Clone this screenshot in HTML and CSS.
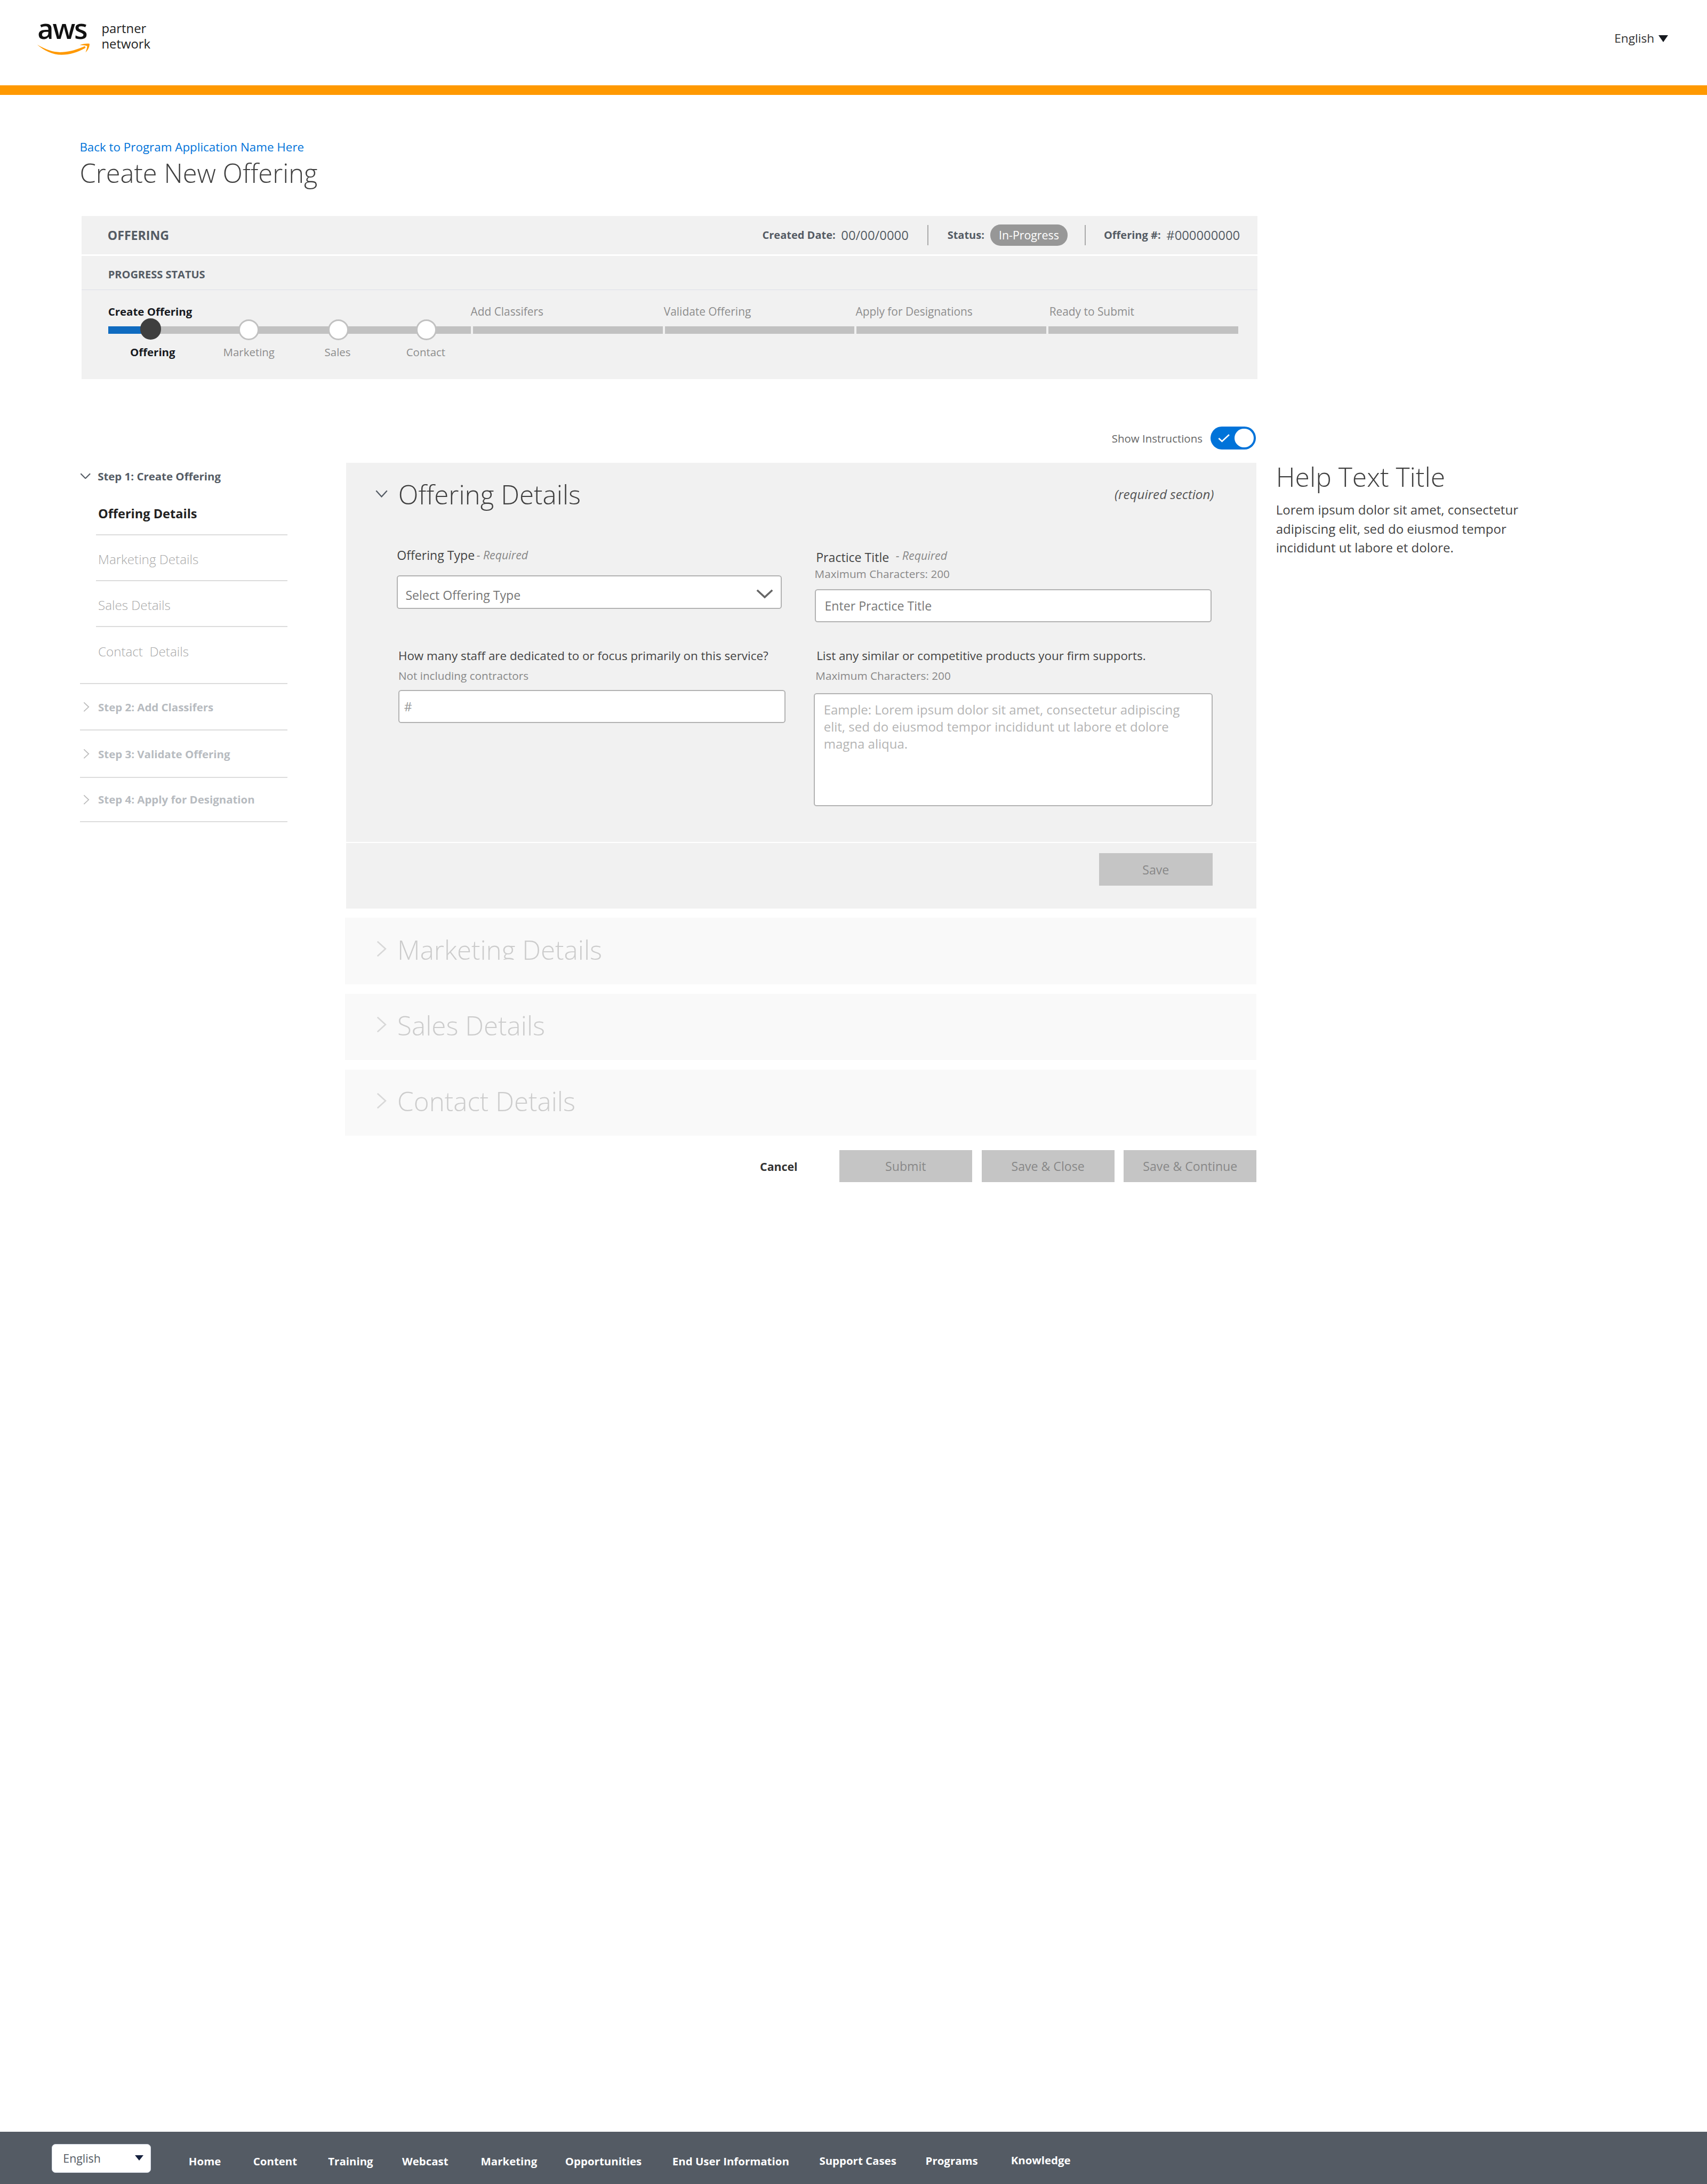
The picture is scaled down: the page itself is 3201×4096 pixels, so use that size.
FILE: index.html
```html
<!DOCTYPE html>
<html lang="en">
<head>
<meta charset="utf-8">
<title>Create New Offering</title>
<link rel="stylesheet" href="styles.css">
</head>
<body>
<div class="page">
  <header class="site-header">
    <div class="logo">
      <div class="logo-mark">
        <span class="logo-aws">aws</span>
        <svg class="logo-smile" viewBox="80 210 340 80"><path d="M85 222C145 258 195 273 245 270C295 268 340 252 388 232L392 243C340 272 290 287 240 287C185 287 130 262 85 222Z"/><path d="M355 225C375 218 400 214 417 217C418 235 408 258 392 272C398 255 403 240 402 231C392 227 375 226 355 225Z"/></svg>
      </div>
      <div class="logo-text">partner<br>network</div>
    </div>
    <div class="lang">English<span class="caret"></span></div>
  </header>
  <div class="accent"></div>

  <main class="content">
    <a class="back" href="#">Back to Program Application Name Here</a>
    <h1 class="title">Create New Offering</h1>

    <div class="summary">
      <section class="bar">
        <div class="bar-name">OFFERING</div>
        <div class="meta">
          <div class="meta-item"><b>Created Date:</b><span class="meta-date">00/00/0000</span></div>
          <i class="meta-sep"></i>
          <div class="meta-item meta-status"><b>Status:</b><span class="pill">In-Progress</span></div>
          <i class="meta-sep"></i>
          <div class="meta-item meta-number"><b>Offering #:</b><span class="meta-date">#000000000</span></div>
        </div>
      </section>
      <section class="progress">
        <div class="progress-head">PROGRESS STATUS</div>
        <div class="phases">
          <div class="phase phase-first">
            <div class="phase-label current">Create Offering</div>
            <div class="track">
              <div class="track-fill"></div>
              <div class="stop stop-1"><i class="dot dot-on"></i><span class="stop-label on">Offering</span></div>
              <div class="stop stop-2"><i class="dot"></i><span class="stop-label">Marketing</span></div>
              <div class="stop stop-3"><i class="dot"></i><span class="stop-label">Sales</span></div>
              <div class="stop stop-4"><i class="dot"></i><span class="stop-label">Contact</span></div>
            </div>
          </div>
          <div class="phase"><div class="phase-label shift-a">Add Classifers</div><div class="track"></div></div>
          <div class="phase"><div class="phase-label shift-b">Validate Offering</div><div class="track"></div></div>
          <div class="phase"><div class="phase-label shift-b">Apply for Designations</div><div class="track"></div></div>
          <div class="phase"><div class="phase-label shift-c">Ready to Submit</div><div class="track"></div></div>
        </div>
      </section>
      <div class="instructions">
        <span>Show Instructions</span>
        <div class="toggle">
          <svg class="toggle-check" viewBox="0 0 25 17"><path d="M1.5 9L8.5 15.5L23.5 1.5"/></svg>
          <i class="toggle-knob"></i>
        </div>
      </div>
    </div>

    <div class="workspace">
      <nav class="side">
        <div class="side-group">
          <div class="side-step side-step-open">
            <svg class="side-chev" viewBox="0 0 23 13"><path d="M1.5 1.5L11.5 11.5L21.5 1.5"/></svg>
            <span>Step 1: Create Offering</span>
          </div>
          <div class="side-item active">Offering Details</div>
          <div class="side-item">Marketing Details</div>
          <div class="side-item">Sales Details</div>
          <div class="side-item side-item-last">Contact&nbsp; Details</div>
        </div>
        <div class="side-step side-step-a"><svg class="side-arrow" viewBox="0 0 13 22"><path d="M1.5 1.5L11.5 11L1.5 20.5"/></svg><span>Step 2: Add Classifers</span></div>
        <div class="side-step side-step-b"><svg class="side-arrow" viewBox="0 0 13 22"><path d="M1.5 1.5L11.5 11L1.5 20.5"/></svg><span>Step 3: Validate Offering</span></div>
        <div class="side-step side-step-c"><svg class="side-arrow" viewBox="0 0 13 22"><path d="M1.5 1.5L11.5 11L1.5 20.5"/></svg><span>Step 4: Apply for Designation</span></div>
      </nav>

      <div class="main-col">
        <section class="card">
          <div class="card-head">
            <svg class="card-chev" viewBox="0 0 26 16"><path d="M1.5 1.5L13 14L24.5 1.5"/></svg>
            <h2 class="card-title">Offering Details</h2>
            <em class="card-note">(required section)</em>
          </div>
          <div class="form">
            <div class="field">
              <div class="field-label"><span>Offering Type</span><em>- Required</em></div>
              <div class="control select"><span class="select-text">Select Offering Type</span>
                <svg class="select-chev" viewBox="0 0 36 20"><path d="M2 2L18 17L34 2"/></svg>
              </div>
            </div>
            <div class="field field-right">
              <div class="field-label field-label-b"><span>Practice Title</span><em>- Required</em></div>
              <div class="hint hint-tight">Maximum Characters: 200</div>
              <div class="control input-title">Enter Practice Title</div>
            </div>
            <div class="field field-staff">
              <div class="field-label field-q"><span>How many staff are dedicated to or focus primarily on this service?</span></div>
              <div class="hint">Not including contractors</div>
              <div class="control input-count">#</div>
            </div>
            <div class="field field-list">
              <div class="field-label field-q"><span>List any similar or competitive products your firm supports.</span></div>
              <div class="hint">Maximum Characters: 200</div>
              <div class="control textarea">Eample: Lorem ipsum dolor sit amet, consectetur adipiscing<br>elit, sed do eiusmod tempor incididunt ut labore et dolore<br>magna aliqua.</div>
            </div>
          </div>
          <div class="card-foot"><button class="btn btn-save">Save</button></div>
        </section>

        <section class="fold"><svg class="fold-chev" viewBox="0 0 21 35"><path d="M2 2L19 17.5L2 33"/></svg><h2 class="fold-title fold-title-cut">Marketing Details</h2></section>
        <section class="fold"><svg class="fold-chev" viewBox="0 0 21 35"><path d="M2 2L19 17.5L2 33"/></svg><h2 class="fold-title">Sales Details</h2></section>
        <section class="fold"><svg class="fold-chev" viewBox="0 0 21 35"><path d="M2 2L19 17.5L2 33"/></svg><h2 class="fold-title">Contact Details</h2></section>

        <div class="actions">
          <a class="cancel" href="#">Cancel</a>
          <button class="btn">Submit</button>
          <button class="btn">Save &amp; Close</button>
          <button class="btn">Save &amp; Continue</button>
        </div>
      </div>

      <aside class="help">
        <h2 class="help-title">Help Text Title</h2>
        <p class="help-body">Lorem ipsum dolor sit amet, consectetur<br>adipiscing elit, sed do eiusmod tempor<br>incididunt ut labore et dolore.</p>
      </aside>
    </div>
  </main>

  <footer class="site-footer">
    <div class="foot-lang">English<span class="foot-caret"></span></div>
    <nav class="foot-nav">
      <a href="#">Home</a><a href="#">Content</a><a href="#">Training</a><a href="#">Webcast</a><a href="#">Marketing</a><a href="#">Opportunities</a><a href="#">End User Information</a><a class="nudge" href="#">Support Cases</a><a class="nudge" href="#">Programs</a><a class="nudge-more" href="#">Knowledge</a>
    </nav>
  </footer>
</div>
</body>
</html>
```
FILE: styles.css
```css
/* 1rem = 10px of the reference */
html { font-size: 8.8917px; }
* { box-sizing: border-box; }
body {
  margin: 0;
  background: #fff;
  color: #444;
  font-family: "Open Sans", "Noto Sans", "Liberation Sans", sans-serif;
  font-size: 2.5rem;
}
h1, h2, p { margin: 0; font-weight: 400; }
a { text-decoration: none; color: inherit; }
i, em { display: block; }
.page { min-height: 100vh; display: flex; flex-direction: column; }

/* header */
.site-header { height: 18rem; display: flex; justify-content: space-between; align-items: flex-start; padding: 0 8.2rem 0 7.7rem; }
.logo { display: flex; margin-top: 2rem; }
.logo-mark { width: 11.33rem; display: flex; flex-direction: column; }
.logo-aws { font-size: 5.9rem; line-height: 7rem; height: 7rem; margin-top: .5rem; margin-bottom: -.5rem; font-weight: 600; color: #111; letter-spacing: -.25rem; margin-left: .2rem; }
.logo-smile { width: 11.33rem; height: 2.67rem; fill: #f90; }
.logo-text { margin-left: 2.4rem; margin-top: 2.4rem; font-size: 2.68rem; line-height: 3.3rem; color: #222; }
.lang { margin-top: 6.3rem; line-height: 3.6rem; font-size: 2.55rem; color: #333; display: flex; align-items: center; }
.caret { width: 0; height: 0; margin-left: .9rem; border-left: 1.05rem solid transparent; border-right: 1.05rem solid transparent; border-top: 1.5rem solid #16191f; }
.accent { height: 2rem; background: #f90; }

/* page head */
.content { padding: 9.6rem 0 0 16.8rem; }
.back { display: block; line-height: 3rem; font-size: 2.52rem; color: #0073d9; }
.title { font-size: 5.5rem; line-height: 7rem; font-weight: 300; color: #3f3f3f; margin-top: .3rem; }

/* summary */
.summary { width: 248rem; margin: 5.7rem 0 0 .4rem; }
.bar { height: 8rem; background: #f1f1f1; display: flex; justify-content: space-between; align-items: center; padding: 0 3.7rem 0 5.5rem; }
.bar-name { font-size: 2.6rem; font-weight: 700; color: #545b64; }
.meta { display: flex; align-items: center; gap: 4rem; color: #545b64; }
.meta-item { display: flex; align-items: center; gap: 1.2rem; }
.meta-item b { font-size: 2.25rem; font-weight: 700; }
.meta-date { font-size: 2.68rem; }
.meta-status { margin-right: -.45rem; }
.meta-number { margin-left: -.15rem; }
.meta-sep { width: .2rem; height: 4.2rem; background: #a9a9a9; }
.pill { width: 16.4rem; height: 4.4rem; border-radius: 2.2rem; background: #979797; color: #fff; font-size: 2.4rem; display: flex; justify-content: center; align-items: center; }
.progress { height: 26rem; margin-top: .4rem; background: #f1f1f1; }
.progress-head { height: 7.2rem; padding: .6rem 0 0 5.6rem; display: flex; align-items: center; border-bottom: .2rem solid #dcdfe8; font-size: 2.25rem; font-weight: 700; color: #545b64; }
.phases { display: flex; gap: .45rem; padding: 2.7rem 0 0 5.6rem; }
.phase { width: 40rem; }
.phase-first { width: 76.5rem; }
.phase-label { height: 3.6rem; line-height: 3.6rem; font-size: 2.35rem; color: #8d8d8d; white-space: nowrap; margin-bottom: 1.3rem; }
.phase-label.current { font-size: 2.3rem; color: #16191f; font-weight: 700; }
.shift-a { margin-left: -.5rem; }
.shift-b { margin-left: -.2rem; }
.shift-c { margin-left: .2rem; }
.track { position: relative; height: 1.6rem; background: #c1c1c1; }
.track-fill { width: 7.2rem; height: 100%; background: #0f6bc0; }
.stop { position: absolute; top: 0; width: 0; }
.stop-1 { left: 9rem; }
.stop-2 { left: 29.7rem; }
.stop-3 { left: 48.6rem; }
.stop-4 { left: 67.1rem; }
.dot { position: absolute; left: -2.2rem; top: -1.4rem; width: 4.4rem; height: 4.4rem; border-radius: 50%; background: #fff; border: .4rem solid #c1c1c1; }
.dot-on { top: -1.6rem; background: #3f3f3f; border-color: #3f3f3f; }
.stop-label { position: absolute; top: 3.6rem; left: 0; transform: translateX(-50%); line-height: 3.6rem; font-size: 2.3rem; color: #8d8d8d; white-space: nowrap; }
.stop-label.on { left: .4rem; color: #16191f; font-weight: 700; }
.stop-3 .stop-label { left: -.2rem; }
.stop-4 .stop-label { left: -.1rem; }
.instructions { height: 4.8rem; margin-top: 10rem; padding-right: .4rem; display: flex; justify-content: flex-end; align-items: center; gap: 1.7rem; font-size: 2.3rem; color: #666; }
.toggle { position: relative; width: 9.5rem; height: 4.8rem; border-radius: 2.4rem; background: #0073d9; }
.toggle-check { position: absolute; left: 1.6rem; top: 1.6rem; width: 2.5rem; height: 1.7rem; fill: none; stroke: #fff; stroke-width: 3; }
.toggle-knob { position: absolute; right: .4rem; top: .4rem; width: 4rem; height: 4rem; border-radius: 50%; background: #fff; }

/* workspace */
.workspace { display: grid; grid-template-columns: 56.2rem 192rem 1fr; margin-top: 2.8rem; }
.side { width: 43.7rem; margin-left: .1rem; }
.side-group { border-bottom: .3rem solid #dcdcdc; height: 46.7rem; }
.side-step { display: flex; align-items: center; font-size: 2.3rem; font-weight: 700; color: #b7bbc0; border-bottom: .3rem solid #dcdcdc; white-space: nowrap; }
.side-step span { margin-left: 1.8rem; }
.side-step-open { height: 5.6rem; padding-bottom: 0; color: #545b64; border-bottom: 0; }
.side-step-open span { margin-left: 1.4rem; }
.side-step-a { height: 9.8rem; padding-left: .7rem; }
.side-step-b { height: 10rem; padding-left: .7rem; }
.side-step-c { height: 9.3rem; padding-left: .7rem; }
.side-chev { width: 2.3rem; height: 1.3rem; fill: none; stroke: #545b64; stroke-width: 2.4; }
.side-arrow { width: 1.3rem; height: 2.2rem; fill: none; stroke: #bcbcbc; stroke-width: 2; }
.side-item { height: 9.7rem; margin-left: 3.4rem; padding: 3.3rem 0 0 .4rem; line-height: 3.6rem; font-size: 2.72rem; font-weight: 300; color: #a8a8a8; border-bottom: .3rem solid #dcdcdc; }
.side-item.active { font-size: 2.65rem; font-weight: 700; color: #222; }
.side-item-last { border-bottom: 0; }

/* main card */
.main-col { width: 192rem; }
.card { background: #f1f1f1; height: 94rem; }
.card-head { height: 13.2rem; display: flex; align-items: center; padding: 0 9rem 0 6.2rem; }
.card-chev { width: 2.6rem; height: 1.6rem; fill: none; stroke: #545b64; stroke-width: 2.6; }
.card-title { flex: 1; margin-left: 2.2rem; font-size: 5.55rem; font-weight: 300; color: #3f3f3f; }
.card-note { font-size: 2.72rem; color: #555; }
.form { height: 67rem; padding: 4.5rem 0 0 10.7rem; display: grid; grid-template-columns: 87.9rem 1fr; grid-template-rows: 21.2rem auto; border-bottom: .3rem solid #fff; }
.field-label { height: 3.6rem; display: flex; line-height: 3.6rem; font-size: 2.6rem; color: #444; white-space: nowrap; }
.field-label em { font-size: 2.4rem; color: #888; margin-left: .4rem; }
.field-label-b { margin: .4rem 0 0 .3rem; }
.field-label-b em { margin: -.3rem 0 0 1.4rem; }
.field-q { font-size: 2.52rem; }
.hint { height: 3rem; line-height: 3rem; margin-top: 1rem; font-size: 2.33rem; color: #888; white-space: nowrap; }
.hint-tight { margin-top: .3rem; }
.control { background: #fff; border: .3rem solid #b2b2b2; border-radius: .6rem; font-size: 2.6rem; color: #777; display: flex; align-items: center; position: relative; white-space: nowrap; }
.select { width: 81.2rem; height: 7.1rem; margin-top: 2.5rem; padding: 0 0 0 1.6rem; }
.select-text { margin-top: 1.2rem; }
.select-chev { position: absolute; right: 1.6rem; top: 2.7rem; width: 3.6rem; height: 2rem; fill: none; stroke: #666; stroke-width: 4; }
.field-right { margin-left: .2rem; }
.input-title { width: 83.7rem; height: 7rem; margin-top: 1.7rem; padding-left: 1.9rem; }
.field-staff { margin-left: .3rem; }
.input-count { width: 81.7rem; height: 6.9rem; margin-top: 1.5rem; padding-left: 1rem; color: #999; }
.field-list { margin-left: .6rem; }
.field-list .hint { margin-left: -.2rem; }
.textarea { width: 84.1rem; height: 23.9rem; margin: 2.1rem 0 0 -.6rem; padding: 1.5rem 0 0 1.9rem; display: block; line-height: 3.6rem; font-size: 2.7rem; color: #b4b4b4; }
.card-foot { height: 13.8rem; padding: 2.2rem 9.3rem 0 0; display: flex; justify-content: flex-end; align-items: flex-start; }
.btn { width: 28rem; height: 6.8rem; padding: 0; border: 0; background: #c5c5c5; color: #888; font: inherit; font-size: 2.6rem; }
.btn-save { width: 23.9rem; }

/* folded sections */
.fold { height: 14rem; margin: 2rem 0 0 -.2rem; background: #f9f9f9; display: flex; align-items: flex-start; padding-left: 6.6rem; }
.fold-chev { width: 2.1rem; height: 3.5rem; margin-top: 4.8rem; fill: none; stroke: #d8d8d8; stroke-width: 3; }
.fold-title { margin: 3.2rem 0 0 2.3rem; font-size: 5.55rem; line-height: 7rem; font-weight: 300; color: #ccc; }
.fold-title-cut { height: 5.7rem; overflow: hidden; }
.actions { height: 6.8rem; margin: 3rem 0 0 -.2rem; display: flex; justify-content: flex-end; align-items: center; gap: 2rem; }
.cancel { font-weight: 700; font-size: 2.4rem; color: #333; margin-right: 6.8rem; }

/* help */
.help { padding-left: 4.1rem; }
.help-title { font-size: 5.6rem; line-height: 6rem; font-weight: 300; color: #3f3f3f; }
.help-body { margin-top: 1.9rem; font-size: 2.7rem; line-height: 4rem; color: #444; white-space: nowrap; }

/* footer */
.site-footer { height: 11rem; margin-top: auto; background: #545b64; display: flex; align-items: flex-start; padding-left: 10.9rem; }
.foot-lang { position: relative; width: 20.9rem; height: 6rem; margin-top: 2.6rem; padding-left: 2.3rem; display: flex; align-items: center; background: #fff; border: .2rem solid #d5dbe6; border-radius: .8rem; font-size: 2.4rem; color: #545b64; }
.foot-caret { position: absolute; right: 1.4rem; top: 2.2rem; width: 0; height: 0; border-left: 1rem solid transparent; border-right: 1rem solid transparent; border-top: 1.2rem solid #16213e; }
.foot-nav { margin-left: 8rem; height: 11rem; padding-top: 1.4rem; flex: 1; display: grid; grid-template-columns: 13.6rem 15.8rem 15.6rem 16.6rem 17.8rem 22.6rem 31rem 22.4rem 18rem 1fr; align-items: center; font-size: 2.3rem; font-weight: 700; color: #fff; white-space: nowrap; }
.nudge { margin-bottom: .4rem; }
.nudge-more { margin-bottom: .6rem; }
```
